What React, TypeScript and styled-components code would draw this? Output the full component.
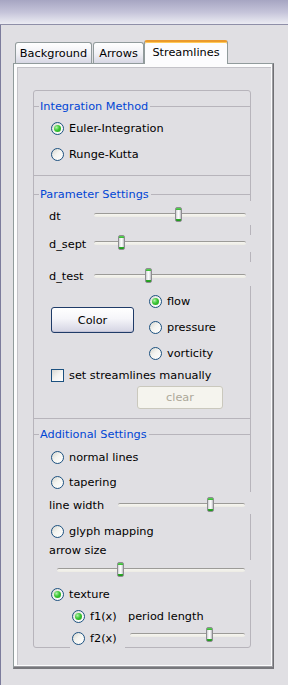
import React from 'react';
import styled, { createGlobalStyle, css } from 'styled-components';

const GlobalStyle = createGlobalStyle`
  html, body { margin: 0; padding: 0; background: #e0dfe3; }
  body {
    font-family: "DejaVu Sans", "Liberation Sans", sans-serif;
    font-size: 11.3px;
    color: #000;
  }
  * { box-sizing: border-box; }
`;

const LINE = '#b7b4bb';

const Window = styled.div`
  width: 288px;
  height: 685px;
  background: #e0dfe3;
  display: flex;
  flex-direction: column;
  overflow: hidden;
`;

const TitleBand = styled.div`
  height: 25px;
  flex: none;
  background: linear-gradient(#a6a5c2, #c4c3d9 50%, #ececf3);
  border-bottom: 1px solid #8f8fa8;
`;

const Body = styled.div`
  flex: 1;
  border-left: 1px solid #7c7c9c;
  padding: 15px 0 0 12px;
`;

const TabRow = styled.div`
  display: flex;
  align-items: flex-end;
  height: 24px;
  margin-left: 2px;
  position: relative;
  z-index: 1;
`;

const Tab = styled.div<{ $active?: boolean; $w: number; $ml?: number }>`
  width: ${(p) => p.$w}px;
  margin-left: ${(p) => p.$ml ?? 0}px;
  display: flex;
  align-items: center;
  justify-content: center;
  border: 1px solid #919b9c;
  border-bottom: none;
  border-radius: 3px 3px 0 0;
  line-height: 13px;
  ${(p) =>
    p.$active
      ? css`
          height: 24px;
          background: #fcfcfe;
          border-top: 2px solid #eb9a2c;
          box-shadow: inset 0 1px 0 #ffc957;
          padding-bottom: 1px;
        `
      : css`
          height: 21px;
          margin-bottom: 1px;
          background: linear-gradient(#ffffff, #f0f0f5 55%, #d7d7e4);
        `}
`;

const Panel = styled.div`
  margin-top: -1px;
  width: 261px;
  height: 606px;
  background: #fcfcfd;
  border-top: 1px solid #919b9c;
  border-left: 1px solid #919b9c;
  border-right: 1px solid #707074;
  border-bottom: 2px solid #77777c;
  box-shadow: inset -1px -1px 0 #9d9da2;
  padding: 3px 2px 2px 3px;
  display: flex;
`;

const Inner = styled.div`
  flex: 1;
  background: #e0dfe3;
  border-top: 1px solid #c3c2c8;
  border-left: 1px solid #c3c2c8;
  padding: 22px 0 0 15px;
`;

const Frame = styled.div`
  width: 218px;
  border: 1px solid ${LINE};
  border-radius: 3px;
`;

const Section = styled.div<{ $sep?: boolean; $pb?: number }>`
  border-top: ${(p) => (p.$sep ? `1px solid ${LINE}` : 'none')};
  padding-bottom: ${(p) => p.$pb ?? 0}px;
  display: flex;
  flex-direction: column;
`;

const GroupTitle = styled.div<{ $mt: number }>`
  display: flex;
  align-items: center;
  height: 13px;
  margin-top: ${(p) => p.$mt}px;
  color: #0046d5;
  &::before {
    content: '';
    width: 5px;
    height: 1px;
    background: ${LINE};
  }
  &::after {
    content: '';
    flex: 1;
    height: 1px;
    margin-left: 1px;
    background: ${LINE};
  }
  & > span {
    padding: 0 1px;
    line-height: 13px;
    white-space: nowrap;
  }
`;

const RadioRow = styled.div<{ $mt?: number; $pl?: number; $w?: number; $opaque?: boolean }>`
  display: flex;
  align-items: center;
  gap: 5px;
  height: 20px;
  flex: none;
  margin-top: ${(p) => p.$mt ?? 0}px;
  padding-left: ${(p) => p.$pl ?? 17}px;
  width: ${(p) => (p.$w ? `${p.$w}px` : 'auto')};
  background: ${(p) => (p.$opaque ? '#e0dfe3' : 'transparent')};
  white-space: nowrap;
`;

const RadioCircle = styled.span<{ $on?: boolean }>`
  width: 13px;
  height: 13px;
  flex: none;
  border-radius: 50%;
  border: 1px solid #1c5180;
  background: linear-gradient(135deg, #d6d6cf 0%, #f4f4f0 45%, #ffffff 100%);
  display: flex;
  align-items: center;
  justify-content: center;
  &::after {
    content: '';
    display: ${(p) => (p.$on ? 'block' : 'none')};
    width: 7px;
    height: 7px;
    border-radius: 50%;
    background: radial-gradient(circle at 35% 35%, #b4f2ac 0%, #3cc736 45%, #1e9a1b 100%);
  }
`;

const SliderRow = styled.div<{ $h: number; $mt?: number; $pl: number }>`
  display: flex;
  align-items: flex-start;
  height: ${(p) => p.$h}px;
  margin-top: ${(p) => p.$mt ?? 0}px;
  padding-left: ${(p) => p.$pl}px;
  flex: none;
`;

const SliderLabel = styled.span<{ $w: number; $mt: number }>`
  width: ${(p) => p.$w}px;
  flex: none;
  margin-top: ${(p) => p.$mt}px;
  line-height: 13px;
  white-space: nowrap;
`;

const SliderBox = styled.div<{ $pt: number; $pl: number; $pr: number; $cover?: boolean }>`
  flex: 1;
  align-self: stretch;
  padding: ${(p) => p.$pt}px ${(p) => p.$pr}px 0 ${(p) => p.$pl}px;
  margin-right: ${(p) => (p.$cover ? -3 : 0)}px;
  background: ${(p) => (p.$cover ? '#e0dfe3' : 'transparent')};
`;

const Track = styled.div`
  position: relative;
  height: 4px;
  border-top: 1px solid #9c9b98;
  border-radius: 2px;
  background: linear-gradient(#f6f5f0, #ecebe4);
`;

const Thumb = styled.span`
  position: absolute;
  top: -7px;
  width: 7px;
  height: 15px;
  border: 1px solid #8d8d90;
  border-radius: 2px;
  background:
    linear-gradient(#5fd25a, #33b52f) top / 100% 2px no-repeat,
    linear-gradient(#2fae2b, #1d951a) bottom / 100% 2px no-repeat,
    linear-gradient(90deg, #cfcfd2, #ffffff 45%, #ececee 70%, #b9b9bd);
`;

const PlainText = styled.span<{ $ml?: number; $mt?: number }>`
  margin-left: ${(p) => p.$ml ?? 0}px;
  margin-top: ${(p) => p.$mt ?? 0}px;
  line-height: 13px;
  white-space: nowrap;
`;

const TextRow = styled.div<{ $mt: number; $pl: number }>`
  display: flex;
  align-items: center;
  height: 13px;
  margin-top: ${(p) => p.$mt}px;
  padding-left: ${(p) => p.$pl}px;
`;

const ColorBlock = styled.div`
  display: flex;
  align-items: flex-start;
  margin-top: 5px;
  padding-left: 17px;
`;

const RadioColumn = styled.div`
  display: flex;
  flex-direction: column;
  gap: 6px;
  margin-left: 15px;
`;

const PushButton = styled.div<{ $w: number; $h: number; $mt?: number; $disabled?: boolean }>`
  width: ${(p) => p.$w}px;
  height: ${(p) => p.$h}px;
  margin-top: ${(p) => p.$mt ?? 0}px;
  display: flex;
  align-items: center;
  justify-content: center;
  border-radius: 3px;
  flex: none;
  ${(p) =>
    p.$disabled
      ? css`
          border: 1px solid #cac8bd;
          background: #f5f4ee;
          color: #aca899;
        `
      : css`
          border: 1px solid #1f3b68;
          background: linear-gradient(#ffffff, #f5f5f9 45%, #d4d4e3);
          box-shadow: inset 0 -1px 0 #c3c3d6;
        `}
`;

const CheckRow = styled.div`
  display: flex;
  align-items: center;
  gap: 5px;
  height: 17px;
  margin-top: 4px;
  padding-left: 17px;
  white-space: nowrap;
`;

const CheckBox = styled.span`
  width: 13px;
  height: 13px;
  flex: none;
  border: 1px solid #1c5180;
  background: linear-gradient(135deg, #d8d8d2, #f4f4f1 50%, #ffffff);
`;

const ButtonRow = styled.div<{ $mt: number; $pl: number }>`
  display: flex;
  margin-top: ${(p) => p.$mt}px;
  padding-left: ${(p) => p.$pl}px;
`;

const FRow = styled.div<{ $mb?: number }>`
  display: flex;
  align-items: flex-start;
  height: 20px;
  margin-top: 2px;
  margin-bottom: ${(p) => p.$mb ?? 0}px;
  padding-left: 36px;
  flex: none;
`;

function Radio(props: { label: string; on?: boolean; mt?: number; pl?: number; w?: number; opaque?: boolean }) {
  return (
    <RadioRow $mt={props.mt} $pl={props.pl} $w={props.w} $opaque={props.opaque}>
      <RadioCircle $on={props.on} />
      <span>{props.label}</span>
    </RadioRow>
  );
}

function Slider(props: { value: number; pt: number; pl: number; pr: number; cover?: boolean }) {
  return (
    <SliderBox $pt={props.pt} $pl={props.pl} $pr={props.pr} $cover={props.cover}>
      <Track>
        <Thumb style={{ left: `calc(${(props.value * 100).toFixed(2)}% - 3.5px)` }} />
      </Track>
    </SliderBox>
  );
}

export default function App() {
  return (
    <>
      <GlobalStyle />
      <Window>
        <TitleBand />
        <Body>
          <TabRow>
            <Tab $w={77}>Background</Tab>
            <Tab $w={51} $ml={1}>Arrows</Tab>
            <Tab $w={84} $active>Streamlines</Tab>
          </TabRow>
          <Panel>
            <Inner>
              <Frame>
                <Section $pb={11}>
                  <GroupTitle $mt={9}><span>Integration Method</span></GroupTitle>
                  <Radio label="Euler-Integration" on mt={5} />
                  <Radio label="Runge-Kutta" mt={6} />
                </Section>

                <Section $sep $pb={9}>
                  <GroupTitle $mt={12}><span>Parameter Settings</span></GroupTitle>
                  <SliderRow $h={24} $pl={15}>
                    <SliderLabel $w={43} $mt={9}>dt</SliderLabel>
                    <Slider value={0.556} pt={12} pl={2} pr={7} cover />
                  </SliderRow>
                  <SliderRow $h={17} $mt={10} $pl={15}>
                    <SliderLabel $w={43} $mt={3}>d_sept</SliderLabel>
                    <Slider value={0.179} pt={6} pl={2} pr={7} cover />
                  </SliderRow>
                  <SliderRow $h={24} $mt={10} $pl={15}>
                    <SliderLabel $w={43} $mt={8}>d_test</SliderLabel>
                    <Slider value={0.358} pt={12} pl={2} pr={7} cover />
                  </SliderRow>
                  <ColorBlock>
                    <PushButton $w={83} $h={26} $mt={16}>Color</PushButton>
                    <RadioColumn>
                      <Radio label="flow" on pl={0} />
                      <Radio label="pressure" pl={0} />
                      <Radio label="vorticity" pl={0} />
                    </RadioColumn>
                  </ColorBlock>
                  <CheckRow>
                    <CheckBox />
                    <span>set streamlines manually</span>
                  </CheckRow>
                  <ButtonRow $mt={2} $pl={103}>
                    <PushButton $w={86} $h={23} $disabled>clear</PushButton>
                  </ButtonRow>
                </Section>

                <Section $sep>
                  <GroupTitle $mt={9}><span>Additional Settings</span></GroupTitle>
                  <Radio label="normal lines" mt={6} />
                  <Radio label="tapering" mt={5} />
                  <SliderRow $h={22} $pl={15}>
                    <SliderLabel $w={67} $mt={7}>line width</SliderLabel>
                    <Slider value={0.73} pt={11} pl={2} pr={8} cover />
                  </SliderRow>
                  <Radio label="glyph mapping" mt={7} />
                  <TextRow $mt={3} $pl={15}>
                    <PlainText>arrow size</PlainText>
                  </TextRow>
                  <SliderRow $h={20} $mt={3} $pl={21}>
                    <Slider value={0.337} pt={8} pl={2} pr={8} cover />
                  </SliderRow>
                  <Radio label="texture" on mt={4} />
                  <FRow>
                    <Radio label="f1(x)" on pl={2} w={55} />
                    <PlainText $ml={3} $mt={4}>period length</PlainText>
                  </FRow>
                  <FRow $mb={-1}>
                    <Radio label="f2(x)" pl={2} w={55} opaque />
                    <Slider value={0.693} pt={5} pl={5} pr={5} />
                  </FRow>
                </Section>
              </Frame>
            </Inner>
          </Panel>
        </Body>
      </Window>
    </>
  );
}
